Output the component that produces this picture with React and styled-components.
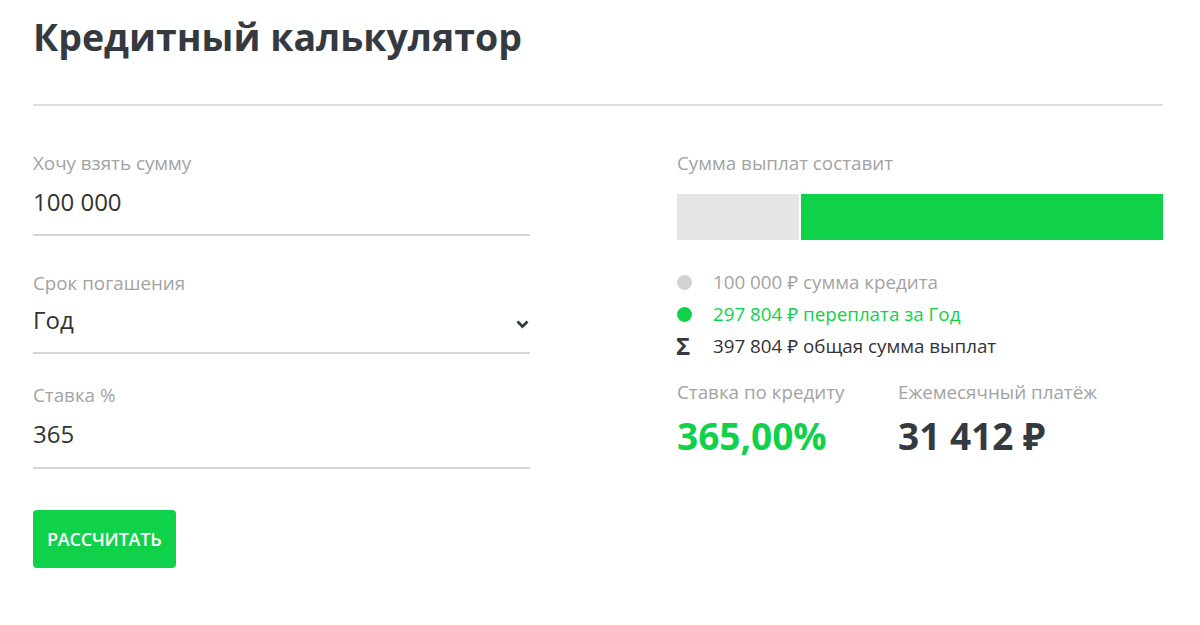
import React from "react";
import styled, { createGlobalStyle } from "styled-components";

const GREEN = "#0fd24a";
const DARK = "#343a40";

const Global = createGlobalStyle`
  html, body { margin: 0; padding: 0; background: #fff; }
  body { font-family: "Open Sans", "Noto Sans", sans-serif; color: ${DARK}; }
`;

const Page = styled.div`
  padding: 12px 37px 40px 33px;
`;

const Title = styled.h1`
  margin: 0;
  font-size: 37.5px;
  line-height: 50px;
  font-weight: 700;
  color: ${DARK};
`;

const Divider = styled.hr`
  margin: 42px 0 0;
  border: 0;
  border-top: 2px solid #dedede;
`;

const Columns = styled.div`
  display: grid;
  grid-template-columns: 497px 1fr;
  column-gap: 147px;
  padding-top: 44px;
`;

const Form = styled.div`
  display: flex;
  flex-direction: column;
`;

const Field = styled.label`
  display: flex;
  flex-direction: column;
  margin-top: ${(p) => p.$before}px;
`;

const Label = styled.span`
  font-size: 18.8px;
  line-height: 26px;
  color: #a3a3a3;
`;

const ValueRow = styled.div`
  display: flex;
  align-items: center;
  justify-content: space-between;
  margin-top: ${(p) => p.$top}px;
  padding-bottom: ${(p) => p.$bottom}px;
  border-bottom: 2px solid #d6d6d6;
`;

const Value = styled.span`
  font-size: 24px;
  line-height: 32px;
  color: #333;
`;

const Chevron = styled.svg`
  width: 13px;
  height: 9px;
  margin-right: 1px;
  margin-top: 8px;
`;

const Button = styled.button`
  align-self: flex-start;
  margin-top: 41px;
  height: 58px;
  padding: 0 14px;
  border: 0;
  border-radius: 4px;
  background: ${GREEN};
  color: #fff;
  font-family: inherit;
  font-size: 18px;
  font-weight: 600;
  letter-spacing: -0.2px;
`;

const Results = styled.div`
  display: flex;
  flex-direction: column;
`;

const Bar = styled.div`
  display: flex;
  gap: 2px;
  height: 46px;
  margin-top: 18px;
`;

const Segment = styled.div`
  background: ${(p) => p.$color};
`;

const Legend = styled.ul`
  list-style: none;
  margin: 29px 0 0;
  padding: 0;
  display: flex;
  flex-direction: column;
  gap: 6px;
`;

const LegendItem = styled.li`
  display: flex;
  align-items: center;
  font-size: 18.8px;
  line-height: 26px;
  color: ${(p) => p.$color};
`;

const Marker = styled.span`
  width: 36px;
  flex: none;
  display: flex;
  align-items: center;
`;

const Dot = styled.span`
  width: 15px;
  height: 15px;
  border-radius: 50%;
  background: ${(p) => p.$color};
`;

const Sigma = styled.span`
  font-size: 24px;
  font-weight: 700;
  color: ${DARK};
  line-height: 26px;
  margin-left: -1px;
`;

const Stats = styled.div`
  display: flex;
  margin-top: 20px;
`;

const Stat = styled.div`
  display: flex;
  flex-direction: column;
  width: ${(p) => p.$w}px;
`;

const StatValue = styled.span`
  font-size: 37px;
  line-height: 48px;
  font-weight: 700;
  margin-top: 7px;
  color: ${(p) => p.$color};
`;

export default function App() {
  const credit = 100000;
  const over = 297804;
  return (
    <>
      <Global />
      <Page>
        <Title>Кредитный калькулятор</Title>
        <Divider />
        <Columns>
          <Form>
            <Field $before={0}>
              <Label>Хочу взять сумму</Label>
              <ValueRow $top={10} $bottom={16}>
                <Value>100 000</Value>
              </ValueRow>
            </Field>
            <Field $before={34}>
              <Label>Срок погашения</Label>
              <ValueRow $top={8} $bottom={16}>
                <Value>Год</Value>
                <Chevron viewBox="0 0 13 9">
                  <path d="M1.5 1.5 L6.5 6.5 L11.5 1.5" fill="none" stroke="#343a40" strokeWidth="2.8" />
                </Chevron>
              </ValueRow>
            </Field>
            <Field $before={28}>
              <Label>Ставка %</Label>
              <ValueRow $top={10} $bottom={17}>
                <Value>365</Value>
              </ValueRow>
            </Field>
            <Button>РАССЧИТАТЬ</Button>
          </Form>
          <Results>
            <Label>Сумма выплат составит</Label>
            <Bar>
              <Segment $color="#e6e6e6" style={{ flex: credit }} />
              <Segment $color={GREEN} style={{ flex: over }} />
            </Bar>
            <Legend>
              <LegendItem $color="#a3a3a3">
                <Marker><Dot $color="#d3d3d3" /></Marker>
                100 000 ₽ сумма кредита
              </LegendItem>
              <LegendItem $color={GREEN}>
                <Marker><Dot $color={GREEN} /></Marker>
                297 804 ₽ переплата за Год
              </LegendItem>
              <LegendItem $color="#333">
                <Marker><Sigma>Σ</Sigma></Marker>
                397 804 ₽ общая сумма выплат
              </LegendItem>
            </Legend>
            <Stats>
              <Stat $w={221}>
                <Label>Ставка по кредиту</Label>
                <StatValue $color={GREEN}>365,00%</StatValue>
              </Stat>
              <Stat $w={250}>
                <Label>Ежемесячный платёж</Label>
                <StatValue $color={DARK}>31 412 ₽</StatValue>
              </Stat>
            </Stats>
          </Results>
        </Columns>
      </Page>
    </>
  );
}
